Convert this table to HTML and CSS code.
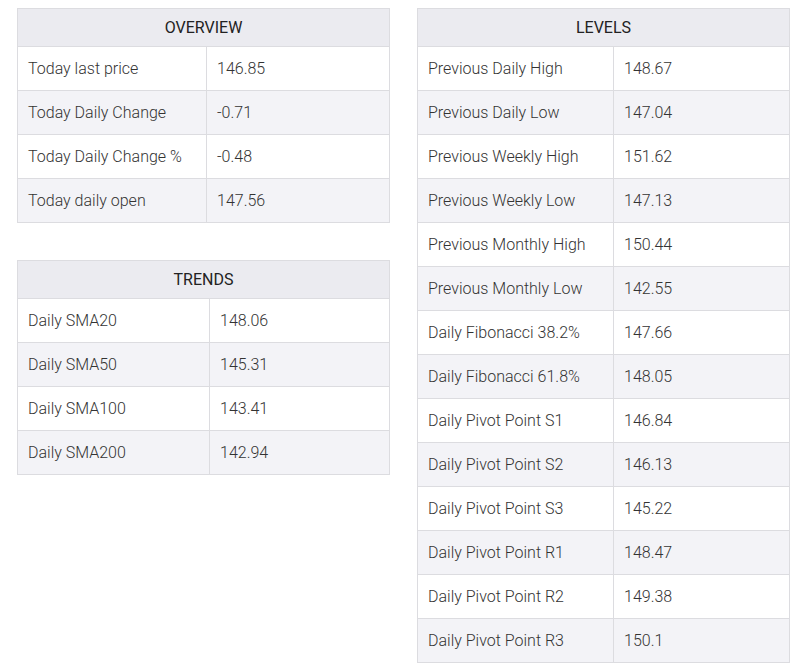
FILE: index.html
```html
<!DOCTYPE html>
<html>
<head>
<meta charset="utf-8">
<link rel="stylesheet" href="styles.css">
</head>
<body>
<div class="page">
  <div class="col">
    <table class="tbl overview">
      <colgroup><col class="c1"><col></colgroup>
      <thead><tr><th colspan="2">OVERVIEW</th></tr></thead>
      <tbody>
        <tr><td>Today last price</td><td>146.85</td></tr>
        <tr><td>Today Daily Change</td><td>-0.71</td></tr>
        <tr><td>Today Daily Change %</td><td>-0.48</td></tr>
        <tr><td>Today daily open</td><td>147.56</td></tr>
      </tbody>
    </table>
    <table class="tbl trends">
      <colgroup><col class="c1"><col></colgroup>
      <thead><tr><th colspan="2">TRENDS</th></tr></thead>
      <tbody>
        <tr><td>Daily SMA20</td><td>148.06</td></tr>
        <tr><td>Daily SMA50</td><td>145.31</td></tr>
        <tr><td>Daily SMA100</td><td>143.41</td></tr>
        <tr><td>Daily SMA200</td><td>142.94</td></tr>
      </tbody>
    </table>
  </div>
  <div class="col">
    <table class="tbl levels">
      <colgroup><col class="c1"><col></colgroup>
      <thead><tr><th colspan="2">LEVELS</th></tr></thead>
      <tbody>
        <tr><td>Previous Daily High</td><td>148.67</td></tr>
        <tr><td>Previous Daily Low</td><td>147.04</td></tr>
        <tr><td>Previous Weekly High</td><td>151.62</td></tr>
        <tr><td>Previous Weekly Low</td><td>147.13</td></tr>
        <tr><td>Previous Monthly High</td><td>150.44</td></tr>
        <tr><td>Previous Monthly Low</td><td>142.55</td></tr>
        <tr><td>Daily Fibonacci 38.2%</td><td>147.66</td></tr>
        <tr><td>Daily Fibonacci 61.8%</td><td>148.05</td></tr>
        <tr><td>Daily Pivot Point S1</td><td>146.84</td></tr>
        <tr><td>Daily Pivot Point S2</td><td>146.13</td></tr>
        <tr><td>Daily Pivot Point S3</td><td>145.22</td></tr>
        <tr><td>Daily Pivot Point R1</td><td>148.47</td></tr>
        <tr><td>Daily Pivot Point R2</td><td>149.38</td></tr>
        <tr><td>Daily Pivot Point R3</td><td>150.1</td></tr>
      </tbody>
    </table>
  </div>
</div>
</body>
</html>
```
FILE: styles.css
```css
html, body {
  margin: 0;
  padding: 0;
  background: #ffffff;
}
body {
  font-family: Roboto, "Liberation Sans", sans-serif;
  font-size: 16px;
  font-weight: 300;
  color: #333333;
}
.page {
  display: flex;
  gap: 27px;
  padding: 8px 0 0 17px;
}
.col {
  display: flex;
  flex-direction: column;
  gap: 37px;
}
.tbl {
  border-collapse: collapse;
  table-layout: fixed;
  width: 373px;
}
.tbl th {
  height: 37px;
  padding: 0;
  background: #ebebf0;
  border: 1px solid #dcdce0;
  font-weight: 400;
  color: #222222;
  text-align: center;
  vertical-align: middle;
}
.tbl td {
  height: 43px;
  padding: 0 10px;
  border: 1px solid #dcdce0;
  vertical-align: middle;
  text-align: left;
}
.tbl tbody tr:nth-child(even) td {
  background: #f3f3f7;
}
.overview .c1 { width: 189px; }
.trends .c1 { width: 192px; }
.levels .c1 { width: 196px; }
```
